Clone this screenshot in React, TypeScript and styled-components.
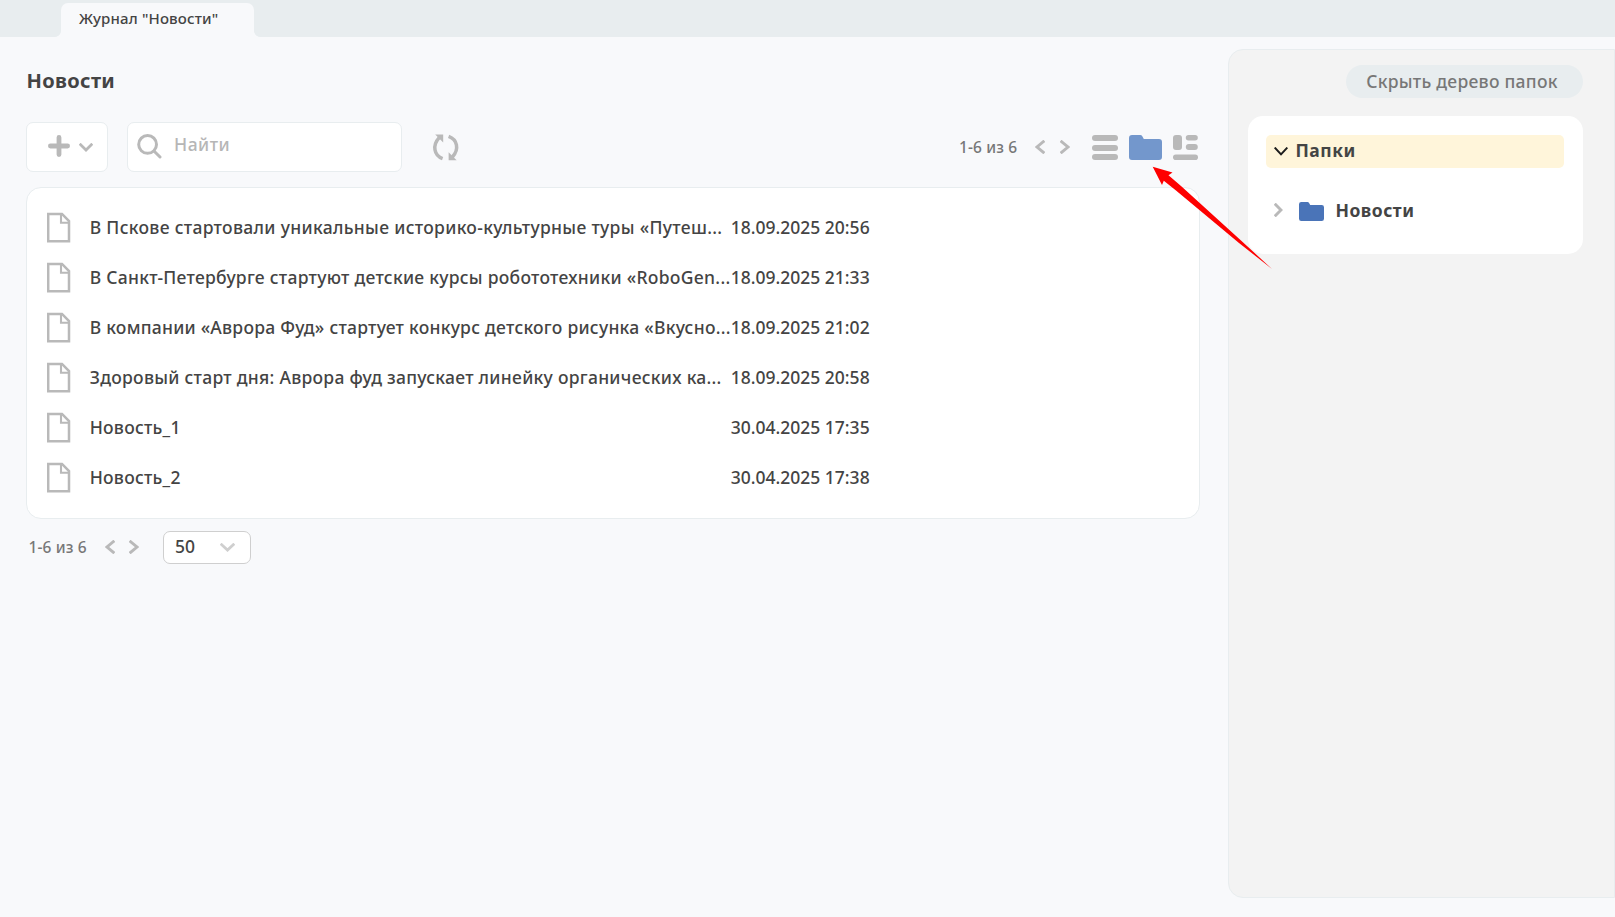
import React from "react";
import styled, { createGlobalStyle } from "styled-components";

const GlobalStyle = createGlobalStyle`
  * { box-sizing: border-box; }
  html, body { margin: 0; padding: 0; background: #f8f9fb; }
  body {
    font-family: "Noto Sans", "Open Sans", sans-serif;
    font-size: 17.5px;
    font-weight: 500;
    color: #444;
    overflow: hidden;
  }
  svg { display: block; flex: none; }
`;

const Page = styled.div`
  position: relative;
  width: 1615px;
  height: 917px;
  display: flex;
  flex-direction: column;
  background: #f8f9fb;
`;

const TabBar = styled.header`
  height: 37px;
  flex: none;
  display: flex;
  align-items: flex-end;
  padding-left: 61px;
  background: #e8edef;
`;

const Tab = styled.div`
  position: relative;
  width: 193px;
  height: 34px;
  padding-left: 18px;
  border-radius: 7px 7px 0 0;
  background: #f8f9fb;
  font-size: 15px;
  letter-spacing: 0.16px;
  line-height: 31px;
  white-space: nowrap;

  &::before, &::after {
    content: "";
    position: absolute;
    bottom: 0;
    width: 6px;
    height: 6px;
  }
  &::before {
    left: -6px;
    background: radial-gradient(circle at 0 0, transparent 5.5px, #f8f9fb 6.2px);
  }
  &::after {
    right: -6px;
    background: radial-gradient(circle at 100% 0, transparent 5.5px, #f8f9fb 6.2px);
  }
`;

const Content = styled.div`
  flex: 1;
  display: flex;
  align-items: flex-start;
`;

const Main = styled.main`
  width: 1200px;
  margin-right: 28px;
  padding: 30px 0 0 26px;
`;

const Title = styled.h1`
  margin: 0 0 27px;
  padding-left: 0.5px;
  font-size: 20px;
  font-weight: 700;
  letter-spacing: 0.35px;
  line-height: 28px;
`;

const Toolbar = styled.div`
  display: flex;
  align-items: center;
  height: 50px;
`;

const AddButton = styled.button`
  display: flex;
  align-items: center;
  gap: 9px;
  width: 82px;
  height: 50px;
  margin: 0 19px 0 0;
  padding: 0 0 0 21px;
  border: 1px solid #e8edef;
  border-radius: 7px;
  background: #fff;
`;

const PlusIcon = styled.svg`
  margin-bottom: 2px;
`;

const SearchBox = styled.div`
  display: flex;
  align-items: center;
  gap: 12px;
  width: 275px;
  height: 50px;
  margin-right: 30px;
  padding: 0 0 1px 9px;
  border: 1px solid #e8edef;
  border-radius: 7px;
  background: #fff;
`;

const Placeholder = styled.span`
  color: #b6b6b6;
  letter-spacing: 0.5px;
  line-height: 24px;
  padding-bottom: 5px;
`;

const Spacer = styled.div`
  flex: 1;
`;

const Pager = styled.div`
  display: flex;
  align-items: center;
  font-size: 15.5px;
  letter-spacing: 0.12px;
  line-height: 20px;
  color: #777;
`;

const PagerText = styled.span`
  width: 76px;
  margin-left: 0.5px;
  white-space: nowrap;
`;

const PagerArrows = styled.div`
  display: flex;
  gap: 14.5px;
`;

const Views = styled.div`
  display: flex;
  align-items: center;
  margin-left: 22.5px;
  padding-right: 2px;
  gap: 10px;
`;

const ActiveView = styled.div`
  margin: 1px 0.5px 0 0.5px;
`;

const Card = styled.section`
  height: 332px;
  margin-top: 15px;
  padding: 14px 0 0 20px;
  border: 1px solid #e8edef;
  border-radius: 15px;
  background: #fff;
`;

const Row = styled.div`
  display: flex;
  align-items: center;
  height: 50px;
  white-space: nowrap;
`;

const RowTitle = styled.span<{ $tracking: number }>`
  width: 641px;
  margin-left: 18.7px;
  letter-spacing: ${(p) => p.$tracking}px;
`;

const Footer = styled.div`
  display: flex;
  align-items: center;
  height: 33px;
  margin-top: 12px;
  padding-left: 2px;
`;

const FooterPager = styled.div`
  padding-bottom: 1px;
`;

const PageSize = styled.div`
  display: flex;
  align-items: center;
  justify-content: space-between;
  width: 88px;
  height: 33px;
  margin-left: 24px;
  padding: 0 15px 0 11px;
  border: 1px solid #cfcfcf;
  border-radius: 7px;
  background: #fff;
  line-height: 29px;
`;

const PageSizeValue = styled.span`
  padding-bottom: 2px;
`;

const Side = styled.aside`
  width: 387px;
  height: 849px;
  margin-top: 12px;
  padding: 15px 31px 0 19px;
  display: flex;
  flex-direction: column;
  border: 1px solid #e8edef;
  border-radius: 15px 0 0 15px;
  background: #f3f3f3;
`;

const HideButton = styled.button`
  align-self: flex-end;
  width: 237px;
  height: 33px;
  padding: 0 5px 1px 0;
  border: 0;
  border-radius: 17px;
  background: #e8edef;
  color: #777;
  font: inherit;
  letter-spacing: 0.27px;
  white-space: nowrap;
`;

const Tree = styled.nav`
  height: 138px;
  margin-top: 18px;
  padding: 19px 19px 0 18px;
  border-radius: 15px;
  background: #fff;
  font-weight: 670;
  letter-spacing: 0.5px;
`;

const TreeRoot = styled.div`
  display: flex;
  align-items: center;
  height: 33px;
  padding-left: 7.5px;
  gap: 8px;
  border-radius: 5px;
  background: #fff5da;
`;

const TreeRootLabel = styled.span`
  padding-bottom: 3px;
`;

const TreeItem = styled.div`
  display: flex;
  align-items: center;
  height: 34px;
  margin-top: 25px;
  padding-left: 8px;
`;

const TreeItemLabel = styled.span`
  margin-left: 11.5px;
`;

const FolderSlot = styled.div`
  margin: 2px 0 0 16px;
`;

const Pointer = styled.svg`
  position: absolute;
  left: 1150px;
  top: 164px;
`;

const Chevron = ({ dir, w, h, color, stroke = 2.9 }: {
  dir: "left" | "right" | "down"; w: number; h: number; color: string; stroke?: number;
}) => {
  const p = stroke / 2 + 0.3;
  const d = {
    left: `M${w - p} ${p}L${p + 0.3} ${h / 2}L${w - p} ${h - p}`,
    right: `M${p} ${p}L${w - p - 0.3} ${h / 2}L${p} ${h - p}`,
    down: `M${p} ${p}L${w / 2} ${h - p - 0.3}L${w - p} ${p}`,
  }[dir];
  return (
    <svg width={w} height={h} fill="none" stroke={color} strokeWidth={stroke} strokeLinecap="square">
      <path d={d} />
    </svg>
  );
};

const Folder = ({ w, h, color }: { w: number; h: number; color: string }) => (
  <svg width={w} height={h} viewBox="0 0 33 25" preserveAspectRatio="none" fill={color}>
    <path d="M3 0H11.2Q12.6 0 13.3 1.2L14.8 4H30Q33 4 33 7V22Q33 25 30 25H3Q0 25 0 22V3Q0 0 3 0Z" />
  </svg>
);

const DocIcon = () => (
  <svg width="24" height="31" fill="none" stroke="#b9b9b9" strokeWidth="2.5">
    <path d="M1.2 1.9H15L22 9V29.2H1.2Z" />
    <path d="M14 2.4V10.8H21.6" strokeWidth="2.1" />
  </svg>
);

const PagerControls = () => (
  <Pager>
    <PagerText>1-6 из 6</PagerText>
    <PagerArrows>
      <Chevron dir="left" w={10} h={14} color="#b9b9b9" />
      <Chevron dir="right" w={10} h={14} color="#b9b9b9" />
    </PagerArrows>
  </Pager>
);

const rows = [
  { title: "В Пскове стартовали уникальные историко-культурные туры «Путеш...", date: "18.09.2025 20:56", tracking: 0.32 },
  { title: "В Санкт-Петербурге стартуют детские курсы робототехники «RoboGen...", date: "18.09.2025 21:33", tracking: 0.27 },
  { title: "В компании «Аврора Фуд» стартует конкурс детского рисунка «Вкусно...", date: "18.09.2025 21:02", tracking: 0.26 },
  { title: "Здоровый старт дня: Аврора фуд запускает линейку органических ка...", date: "18.09.2025 20:58", tracking: 0.28 },
  { title: "Новость_1", date: "30.04.2025 17:35", tracking: 0.25 },
  { title: "Новость_2", date: "30.04.2025 17:38", tracking: 0.25 },
];

export default function App() {
  return (
    <Page>
      <GlobalStyle />
      <TabBar>
        <Tab>Журнал "Новости"</Tab>
      </TabBar>
      <Content>
        <Main>
          <Title>Новости</Title>
          <Toolbar>
            <AddButton aria-label="Добавить">
              <PlusIcon width="22" height="22" stroke="#b9b9b9" strokeWidth="4.8" strokeLinecap="round">
                <path d="M11 2.4V19.6M2.4 11H19.6" />
              </PlusIcon>
              <Chevron dir="down" w={14} h={9} color="#b9b9b9" stroke={2.7} />
            </AddButton>
            <SearchBox>
              <svg width="25" height="25" fill="none" stroke="#b9b9b9" strokeWidth="3" strokeLinecap="round">
                <circle cx="10.6" cy="10.4" r="8.9" />
                <path d="M17.2 17.2L23 23" />
              </svg>
              <Placeholder>Найти</Placeholder>
            </SearchBox>
            <svg width="28" height="28" fill="none" stroke="#b9b9b9" strokeWidth="3.5">
              <path d="M10.6 25.6C1.8 22.4 .2 12.2 7.2 4.6" />
              <path d="M16.6 3.4C25.2 6.6 27.6 16 20.4 24" />
              <path d="M3.2 1.6H11.2V9.6Z" fill="#b9b9b9" stroke="none" />
              <path d="M16.6 27.2V19.2L24.6 27.2Z" fill="#b9b9b9" stroke="none" />
            </svg>
            <Spacer />
            <PagerControls />
            <Views>
              <svg width="26" height="26" fill="#b9b9b9">
                <rect y="1" width="26" height="6" rx="3" />
                <rect y="11" width="26" height="6" rx="3" />
                <rect y="20" width="26" height="6" rx="3" />
              </svg>
              <ActiveView>
                <Folder w={33} h={25} color="#7397cc" />
              </ActiveView>
              <svg width="26" height="26" fill="#b9b9b9">
                <rect x="1" y="1" width="9" height="15" rx="3" />
                <rect x="13.8" y="1" width="12" height="5.4" rx="2.7" />
                <rect x="13.8" y="10" width="12" height="6" rx="3" />
                <rect x="1" y="20.4" width="25" height="5.6" rx="2.8" />
              </svg>
            </Views>
          </Toolbar>
          <Card>
            {rows.map((row) => (
              <Row key={row.title}>
                <DocIcon />
                <RowTitle $tracking={row.tracking}>{row.title}</RowTitle>
                <span>{row.date}</span>
              </Row>
            ))}
          </Card>
          <Footer>
            <FooterPager>
              <PagerControls />
            </FooterPager>
            <PageSize>
              <PageSizeValue>50</PageSizeValue>
              <Chevron dir="down" w={15} h={9} color="#cfcfcf" stroke={2.8} />
            </PageSize>
          </Footer>
        </Main>
        <Side>
          <HideButton>Скрыть дерево папок</HideButton>
          <Tree>
            <TreeRoot>
              <Chevron dir="down" w={14} h={9} color="#1c1c1c" stroke={2} />
              <TreeRootLabel>Папки</TreeRootLabel>
            </TreeRoot>
            <TreeItem>
              <Chevron dir="right" w={9} h={14} color="#b9b9b9" />
              <FolderSlot>
                <Folder w={25} h={19} color="#4a74b8" />
              </FolderSlot>
              <TreeItemLabel>Новости</TreeItemLabel>
            </TreeItem>
          </Tree>
        </Side>
      </Content>
      <Pointer width="126" height="108" fill="#fe0000">
        <path d="M2.7 2.7L22.5 8.5L18.5 11.2L31 22L91 76.5L122 105L89 79L26 26.5L13.8 16.8L12 21Z" />
      </Pointer>
    </Page>
  );
}
